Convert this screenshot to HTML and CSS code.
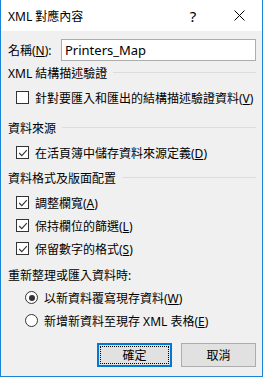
FILE: index.html
```html
<!DOCTYPE html>
<html lang="zh-Hant">
<head>
    <meta charset="UTF-8">
    <meta name="viewport" content="width=device-width, initial-scale=1.0">
    <link rel="stylesheet" href="styles.css">
</head>
<body>
    <div class="dialog">
        <div class="titlebar">
            <span class="title">XML 對應內容</span>
            <span class="title-btn help">?</span>
            <span class="title-btn">
                <svg width="11" height="11" viewBox="0 0 11 11"><path d="M0.5 0.5 L10.5 10.5 M10.5 0.5 L0.5 10.5" stroke="#000" stroke-width="1" fill="none"/></svg>
            </span>
        </div>

        <div class="content">
            <div class="name-row">
                <span class="name-label">名稱(<u>N</u>):</span>
                <div class="textbox">Printers_Map</div>
            </div>

            <div class="group-head">XML 結構描述驗證</div>
            <div class="row check first">
                <span class="box"></span>
                <span>針對要匯入和匯出的結構描述驗證資料(<u>V</u>)</span>
            </div>

            <div class="group-head second">資料來源</div>
            <div class="row check first">
                <span class="box checked"><svg width="10" height="10" viewBox="0 0 10 10"><path d="M1.2 5 L3.8 7.6 L8.8 2.2" stroke="#333" stroke-width="1.1" fill="none"/></svg></span>
                <span>在活頁簿中儲存資料來源定義(<u>D</u>)</span>
            </div>

            <div class="group-head third">資料格式及版面配置</div>
            <div class="row check first">
                <span class="box checked"><svg width="10" height="10" viewBox="0 0 10 10"><path d="M1.2 5 L3.8 7.6 L8.8 2.2" stroke="#333" stroke-width="1.1" fill="none"/></svg></span>
                <span>調整欄寬(<u>A</u>)</span>
            </div>
            <div class="row check">
                <span class="box checked"><svg width="10" height="10" viewBox="0 0 10 10"><path d="M1.2 5 L3.8 7.6 L8.8 2.2" stroke="#333" stroke-width="1.1" fill="none"/></svg></span>
                <span>保持欄位的篩選(<u>L</u>)</span>
            </div>
            <div class="row check">
                <span class="box checked"><svg width="10" height="10" viewBox="0 0 10 10"><path d="M1.2 5 L3.8 7.6 L8.8 2.2" stroke="#333" stroke-width="1.1" fill="none"/></svg></span>
                <span>保留數字的格式(<u>S</u>)</span>
            </div>

            <div class="row refresh-label">重新整理或匯入資料時:</div>
            <div class="row radio">
                <span class="dot selected"></span>
                <span>以新資料覆寫現存資料(<u>W</u>)</span>
            </div>
            <div class="row radio">
                <span class="dot"></span>
                <span>新增新資料至現存 XML 表格(<u>E</u>)</span>
            </div>

            <div class="buttons">
                <button class="btn default"><span class="focus">確定</span></button>
                <button class="btn">取消</button>
            </div>
        </div>
    </div>
</body>
</html>
```

FILE: styles.css
```css
body {
    margin: 0;
    padding: 0;
    font-family: 'Noto Sans', 'Noto Sans CJK TC', sans-serif;
    font-size: 12px;
    color: #000;
    background: #f0f0f0;
}
u {
    text-decoration: underline;
    text-underline-offset: 1px;
}
.dialog {
    width: 261px;
    height: 376px;
    background: #f0f0f0;
    border: 1px solid #1883d7;
    border-top: none;
    overflow: hidden;
}
.titlebar {
    height: 31px;
    background: #ffffff;
    display: flex;
    align-items: center;
}
.title {
    flex: 1;
    padding-left: 7px;
    font-size: 12px;
}
.title-btn {
    width: 46px;
    height: 31px;
    display: flex;
    align-items: center;
    justify-content: center;
}
.help {
    font-size: 15px;
    font-family: 'Noto Sans', sans-serif;
}
.content {
    padding: 8px 6px 0 7px;
}
.name-row {
    display: flex;
    align-items: center;
    height: 22px;
}
.name-label {
    width: 53px;
}
.textbox {
    flex: 1;
    height: 20px;
    line-height: 20px;
    border: 1px solid #adadad;
    background: #fff;
    padding-left: 3px;
    font-size: 13px;
}
.group-head {
    display: flex;
    align-items: center;
    height: 23px;
}
.group-head::after {
    content: '';
    flex: 1;
    height: 1px;
    background: #dcdcdc;
    margin-left: 6px;
}
.group-head.second {
    margin-top: 7px;
}
.group-head.third {
    margin-top: 2px;
}
.row {
    display: flex;
    align-items: center;
    height: 23px;
}
.row.first {
    margin-top: 2px;
}
.row.check {
    padding-left: 8px;
}
.box {
    width: 11px;
    height: 11px;
    border: 1px solid #333;
    background: #fff;
    margin-right: 6px;
    display: flex;
    align-items: center;
    justify-content: center;
}
.refresh-label {
    margin-top: 3px;
}
.row.radio {
    padding-left: 17px;
}
.dot {
    width: 11px;
    height: 11px;
    border: 1px solid #333;
    border-radius: 50%;
    background: #fff;
    margin-right: 6px;
    display: flex;
    align-items: center;
    justify-content: center;
}
.dot.selected::after {
    content: '';
    width: 6px;
    height: 6px;
    border-radius: 50%;
    background: #333;
}
.buttons {
    display: flex;
    justify-content: flex-end;
    gap: 9px;
    margin-top: 11px;
}
.btn {
    width: 75px;
    height: 24px;
    background: #e1e1e1;
    border: 1px solid #adadad;
    font-family: inherit;
    font-size: 12px;
    color: #000;
    padding: 0;
}
.btn.default {
    border: 2px solid #0078d7;
    padding: 1px;
}
.focus {
    display: flex;
    align-items: center;
    justify-content: center;
    height: 100%;
    box-sizing: border-box;
    border: 1px dotted #000;
}
```
